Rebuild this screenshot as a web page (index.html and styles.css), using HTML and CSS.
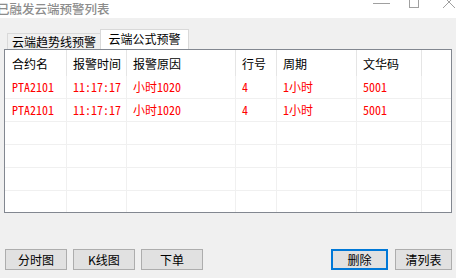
FILE: index.html
```html
<!DOCTYPE html>
<html lang="zh">
<head>
<meta charset="utf-8">
<title>云端预警列表</title>
<link rel="stylesheet" href="styles.css">
</head>
<body>
<div class="titlebar">
  <span class="title">已融发云端预警列表</span>
  <svg class="wincontrols" width="90" height="18" viewBox="366 0 90 18">
    <line x1="373" y1="3.5" x2="390" y2="3.5" stroke="#a0a0a0" stroke-width="1"/>
    <rect x="409.5" y="-3.5" width="9" height="11" fill="none" stroke="#a0a0a0" stroke-width="1"/>
    <line x1="443" y1="-4" x2="455" y2="8" stroke="#a0a0a0" stroke-width="1"/>
    <line x1="455" y1="-4" x2="443" y2="8" stroke="#a0a0a0" stroke-width="1"/>
  </svg>
</div>
<div class="tabs">
  <div class="tab">云端趋势线预警</div>
  <div class="tab active">云端公式预警</div>
</div>
<div class="list">
  <div class="row head">
    <div class="cell">合约名</div><div class="cell">报警时间</div><div class="cell">报警原因</div><div class="cell">行号</div><div class="cell">周期</div><div class="cell">文华码</div><div class="cell last"></div>
  </div>
  <div class="row data">
    <div class="cell">PTA2101</div><div class="cell">11:17:17</div><div class="cell">小时1020</div><div class="cell">4</div><div class="cell">1小时</div><div class="cell">5001</div><div class="cell last"></div>
  </div>
  <div class="row data">
    <div class="cell">PTA2101</div><div class="cell">11:17:17</div><div class="cell">小时1020</div><div class="cell">4</div><div class="cell">1小时</div><div class="cell">5001</div><div class="cell last"></div>
  </div>
  <div class="row data">
    <div class="cell"></div><div class="cell"></div><div class="cell"></div><div class="cell"></div><div class="cell"></div><div class="cell"></div><div class="cell last"></div>
  </div>
  <div class="row data">
    <div class="cell"></div><div class="cell"></div><div class="cell"></div><div class="cell"></div><div class="cell"></div><div class="cell"></div><div class="cell last"></div>
  </div>
  <div class="row data">
    <div class="cell"></div><div class="cell"></div><div class="cell"></div><div class="cell"></div><div class="cell"></div><div class="cell"></div><div class="cell last"></div>
  </div>
  <div class="row data">
    <div class="cell"></div><div class="cell"></div><div class="cell"></div><div class="cell"></div><div class="cell"></div><div class="cell"></div><div class="cell last"></div>
  </div>
</div>
<div class="buttons">
  <div class="group">
    <button class="btn">分时图</button>
    <button class="btn">K线图</button>
    <button class="btn">下单</button>
  </div>
  <div class="group right">
    <button class="btn small default">删除</button>
    <button class="btn small">清列表</button>
  </div>
</div>
</body>
</html>
```
FILE: styles.css
```css
* { box-sizing: border-box; }

body {
  margin: 0;
  width: 456px;
  height: 278px;
  overflow: hidden;
  background: #f0f0f0;
  font-family: "Noto Sans CJK SC", sans-serif;
  font-size: 12px;
  color: #000;
}

.titlebar {
  height: 18px;
  background: #fff;
  display: flex;
  justify-content: space-between;
  align-items: flex-start;
  overflow: hidden;
}

.title {
  margin-left: -3px;
  font-size: 12.5px;
  line-height: 17px;
  font-weight: 500;
  color: #8c8c8c;
  white-space: nowrap;
}

.wincontrols { display: block; }

.tabs {
  height: 31px;
  display: flex;
  align-items: flex-end;
  padding-left: 7px;
}

.tab {
  width: 94px;
  height: 16px;
  border: 1px solid #d9d9d9;
  border-bottom: none;
  background: #f0f0f0;
  line-height: 15px;
  text-align: center;
  white-space: nowrap;
}

.tab.active {
  width: 89px;
  height: 20px;
  margin-left: -1px;
  padding-top: 1px;
  background: #fff;
}

.list {
  margin-left: 4px;
  width: 448px;
  height: 164px;
  border: 1px solid #828790;
  background: #fff;
  overflow: hidden;
}

.row {
  display: grid;
  grid-template-columns: 62px 60px 109px 41px 80px 65px 29px;
  height: 23px;
  border-bottom: 1px solid #f0f0f0;
}

.row.head {
  height: 26px;
  border-bottom: none;
}

.cell {
  border-right: 1px solid #f0f0f0;
  padding-left: 6px;
  line-height: 22px;
  white-space: nowrap;
  overflow: hidden;
}

.cell:first-child { padding-left: 7px; }
.cell.last { border-right: none; }

.head .cell {
  border-right-color: #e5e5e5;
  line-height: 24px;
  padding-top: 2px;
}
.head .cell.last { border-right: none; }

.data .cell {
  color: #ff0000;
  font-family: "Noto Sans Mono CJK SC", "Liberation Mono", monospace;
}

.buttons {
  margin-top: 36px;
  padding: 0 4px 0 5px;
  display: flex;
  justify-content: space-between;
}

.group {
  display: flex;
  gap: 6px;
}

.group.right { gap: 7px; }

.btn {
  width: 62px;
  height: 21px;
  padding: 0;
  margin: 0;
  background: #e1e1e1;
  border: 1px solid #adadad;
  font-family: "Noto Sans CJK SC", sans-serif;
  font-size: 12px;
  line-height: 18px;
  color: #000;
}

.btn.small { width: 57px; }

.btn.default { border: 2px solid #0078d7; }
```
